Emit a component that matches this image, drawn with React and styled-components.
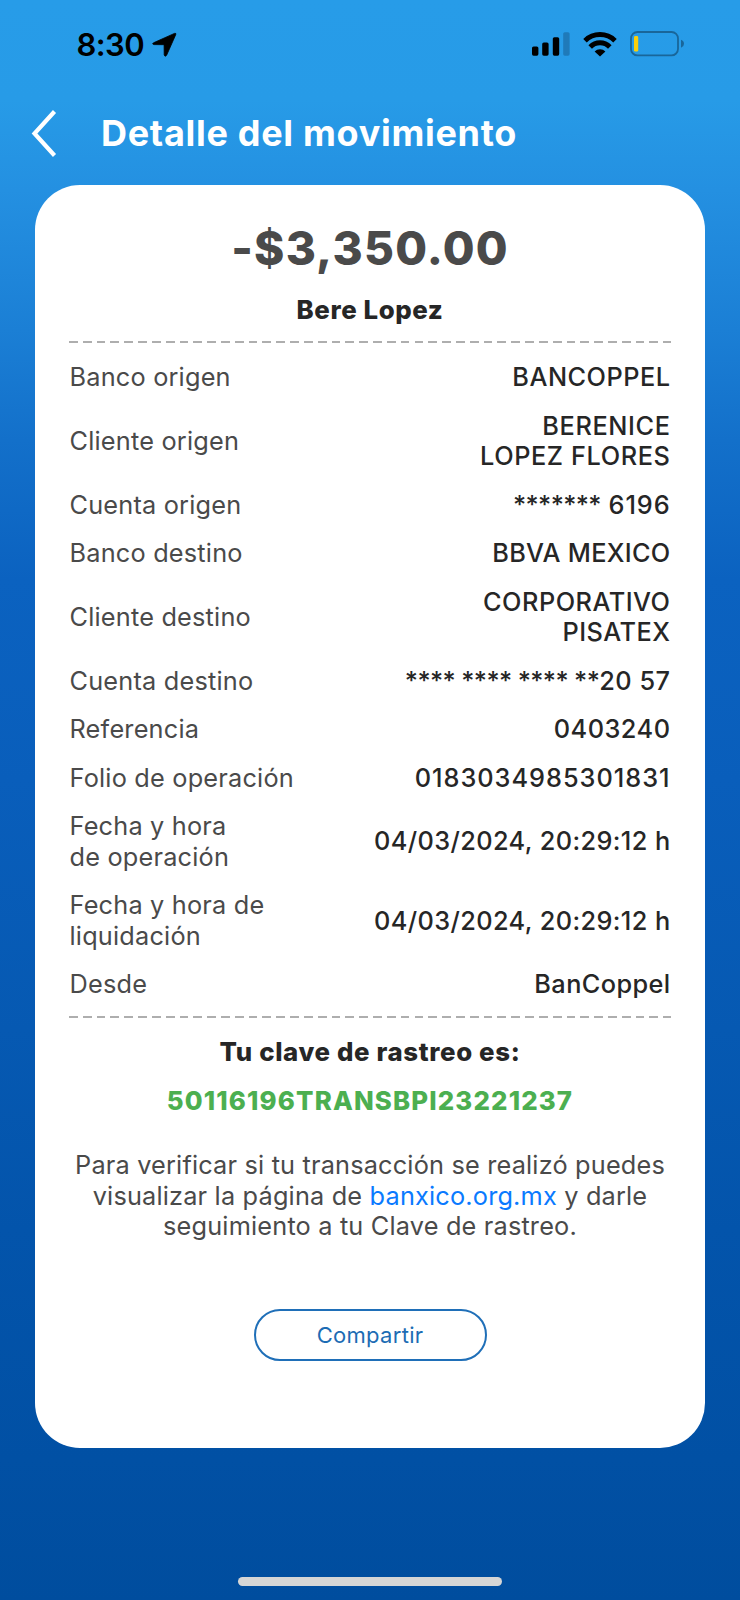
import styled, { createGlobalStyle } from "styled-components";

const GlobalStyle = createGlobalStyle`
  * {
    box-sizing: border-box;
  }
  body {
    margin: 0;
    font-family: Inter, "Liberation Sans", sans-serif;
  }
`;

const Screen = styled.div`
  width: 740px;
  height: 1600px;
  display: flex;
  flex-direction: column;
  overflow: hidden;
  background: linear-gradient(
    180deg,
    #279ce8 0px,
    #279be7 100px,
    #2490e1 190px,
    #1b7fd5 330px,
    #1370ca 440px,
    #0b62c0 580px,
    #095ebb 780px,
    #0659b2 1030px,
    #0354ab 1230px,
    #0150a4 1460px,
    #004d9e 1600px
  );
`;

const StatusBar = styled.div`
  height: 88px;
  padding: 0 56px 0 76.5px;
  display: flex;
  align-items: center;
  justify-content: space-between;
`;

const Group = styled.div`
  display: flex;
  align-items: center;
  gap: ${(props) => props.$gap}px;
`;

const Time = styled.span`
  font-size: 31px;
  font-weight: 600;
  line-height: 37px;
  letter-spacing: -0.6px;
  color: black;
`;

const Header = styled.header`
  height: 97px;
  padding: 0 0 8px 30px;
  display: flex;
  align-items: center;
  gap: 43px;
`;

const Title = styled.h1`
  margin: 0;
  font-size: 36px;
  font-weight: 700;
  line-height: 42px;
  letter-spacing: 0.7px;
  color: white;
`;

const Card = styled.main`
  width: 670px;
  height: 1262.5px;
  margin: 0 35px;
  padding: 35px 34.5px 0;
  display: flex;
  flex-direction: column;
  align-items: center;
  border-radius: 45px;
  background-color: white;
`;

const Amount = styled.div`
  margin-bottom: 9.7px;
  font-size: 46px;
  font-weight: 800;
  line-height: 56px;
  letter-spacing: 1.2px;
  color: #4a4a4a;
`;

const Strong = styled.div`
  font-size: 25.8px;
  font-weight: 800;
  line-height: 48.5px;
  letter-spacing: ${(props) => props.$spacing}px;
  color: ${(props) => props.$color || "#262626"};
`;

const Divider = styled.div`
  width: 602px;
  height: 2px;
  flex: none;
  margin: ${(props) => props.$margin};
  background: repeating-linear-gradient(
    90deg,
    #aeaeae 0px,
    #aeaeae 8.8px,
    transparent 8.8px,
    transparent 13.82px
  );
`;

const Rows = styled.div`
  width: 601px;
  display: flex;
  flex-direction: column;
`;

const Row = styled.div`
  padding: 8.95px 0;
  display: flex;
  align-items: center;
  justify-content: space-between;
  font-size: 25.3px;
  line-height: 30.6px;
`;

const Label = styled.span`
  color: #4a4a4a;
  letter-spacing: 0.2px;
  white-space: pre-line;
`;

const Value = styled.span`
  font-weight: 500;
  color: #262626;
  text-align: right;
  letter-spacing: ${(props) => props.$spacing}px;
  white-space: pre-line;
`;

// hidden digits of an account number
const Mask = styled.span`
  letter-spacing: -0.6px;
`;

const Info = styled.p`
  margin: 24.9px 0 0;
  font-size: 25.3px;
  line-height: 30.6px;
  letter-spacing: 0.18px;
  text-align: center;
  white-space: pre-line;
  color: #4a4a4a;
`;

const Link = styled.a`
  color: #0a7aff;
`;

const Button = styled.button`
  width: 233px;
  height: 52px;
  margin-top: 67px;
  border: 2px solid #1f6fb8;
  border-radius: 26px;
  background: none;
  font-family: inherit;
  font-size: 22px;
  letter-spacing: 0.3px;
  color: #1c6cb4;
`;

const HomeIndicator = styled.div`
  width: 264px;
  height: 9px;
  margin: auto auto 14px;
  border-radius: 5px;
  background-color: #d6d6d6;
`;

const rows = [
  { label: "Banco origen", value: "BANCOPPEL", spacing: 0.5 },
  { label: "Cliente origen", value: "BERENICE\nLOPEZ FLORES", spacing: 0.6 },
  { label: "Cuenta origen", mask: "*******", value: " 6196", spacing: 0.9 },
  { label: "Banco destino", value: "BBVA MEXICO", spacing: 0.3 },
  { label: "Cliente destino", value: "CORPORATIVO\nPISATEX", spacing: 0.5 },
  { label: "Cuenta destino", mask: "**** **** **** **", value: "20 57", spacing: 0.5 },
  { label: "Referencia", value: "0403240", spacing: 0.5 },
  { label: "Folio de operación", value: "0183034985301831", spacing: 1 },
  { label: "Fecha y hora\nde operación", value: "04/03/2024, 20:29:12 h", spacing: 0.4 },
  { label: "Fecha y hora de\nliquidación", value: "04/03/2024, 20:29:12 h", spacing: 0.4 },
  { label: "Desde", value: "BanCoppel", spacing: 0.4 },
];

const LocationIcon = () => (
  <svg width="25" height="25" viewBox="0 0 25 25">
    <path
      d="M1.5 10.8 L22.5 1.4 Q24.4 0.8 23.7 2.7 L14.6 23.3 Q13 25.4 12.2 22.9 L12.1 13.4 Q12.1 12.7 11.4 12.7 L2 12.6 Q-0.4 12 1.5 10.8 Z"
      fill="black"
      stroke="black"
      strokeWidth="0.8"
      strokeLinejoin="round"
    />
  </svg>
);

const SignalIcon = () => (
  <svg width="38" height="24" viewBox="0 0 38 24">
    <rect x="0" y="14.5" width="6.4" height="9.2" rx="1.6" />
    <rect x="10.2" y="10.4" width="6.4" height="13.3" rx="1.6" />
    <rect x="20.8" y="5.2" width="6.4" height="18.5" rx="1.6" />
    <rect x="31.2" y="0.2" width="6.4" height="23.5" rx="1.6" fill="#1f7ab9" />
  </svg>
);

const WifiIcon = () => (
  <svg width="34" height="25" viewBox="0 0 34 25">
    <g fill="none" stroke="black" strokeWidth="5">
      <path d="M2 8.7 A 21.5 21.5 0 0 1 32 8.7" />
      <path d="M7.2 14.9 A 13.8 13.8 0 0 1 26.8 14.9" />
    </g>
    <path d="M17 24.6 L11.6 19.4 A 7.6 7.6 0 0 1 22.4 19.4 Z" />
  </svg>
);

const BatteryIcon = () => (
  <svg width="54" height="26" viewBox="0 0 54 26">
    <rect x="1" y="1" width="47" height="23.4" rx="6.5" fill="none" stroke="#19669a" strokeWidth="1.8" />
    <rect x="4" y="5" width="4.2" height="15.6" rx="1.4" fill="#fbcf0a" />
    <path d="M51 8.8 Q54 10 54 12.7 Q54 15.4 51 16.8 Z" fill="#19669a" />
  </svg>
);

const BackIcon = () => (
  <svg width="28" height="48" viewBox="0 0 28 48">
    <path d="M24.5 2.5 L4.5 24.5 L24.5 46.5" fill="none" stroke="white" strokeWidth="4.2" />
  </svg>
);

const App = () => {
  return (
    <Screen>
      <GlobalStyle />
      <StatusBar>
        <Group $gap={8}>
          <Time>8:30</Time>
          <LocationIcon />
        </Group>
        <Group $gap={13}>
          <SignalIcon />
          <WifiIcon />
          <BatteryIcon />
        </Group>
      </StatusBar>
      <Header>
        <BackIcon />
        <Title>Detalle del movimiento</Title>
      </Header>
      <Card>
        <Amount>-$3,350.00</Amount>
        <Strong $spacing={0.6}>Bere Lopez</Strong>
        <Divider $margin="7px 0 10.1px" />
        <Rows>
          {rows.map((row) => (
            <Row key={row.label}>
              <Label>{row.label}</Label>
              <Value $spacing={row.spacing}>
                {row.mask && <Mask>{row.mask}</Mask>}
                {row.value}
              </Value>
            </Row>
          ))}
        </Rows>
        <Divider $margin="7.3px 0 10px" />
        <Strong $spacing={0.65}>Tu clave de rastreo es:</Strong>
        <Strong $spacing={1.15} $color="#4caf50">
          50116196TRANSBPI23221237
        </Strong>
        <Info>
          Para verificar si tu transacción se realizó puedes{"\n"}
          visualizar la página de <Link>banxico.org.mx</Link> y darle{"\n"}
          seguimiento a tu Clave de rastreo.
        </Info>
        <Button>Compartir</Button>
      </Card>
      <HomeIndicator />
    </Screen>
  );
};

export default App;
